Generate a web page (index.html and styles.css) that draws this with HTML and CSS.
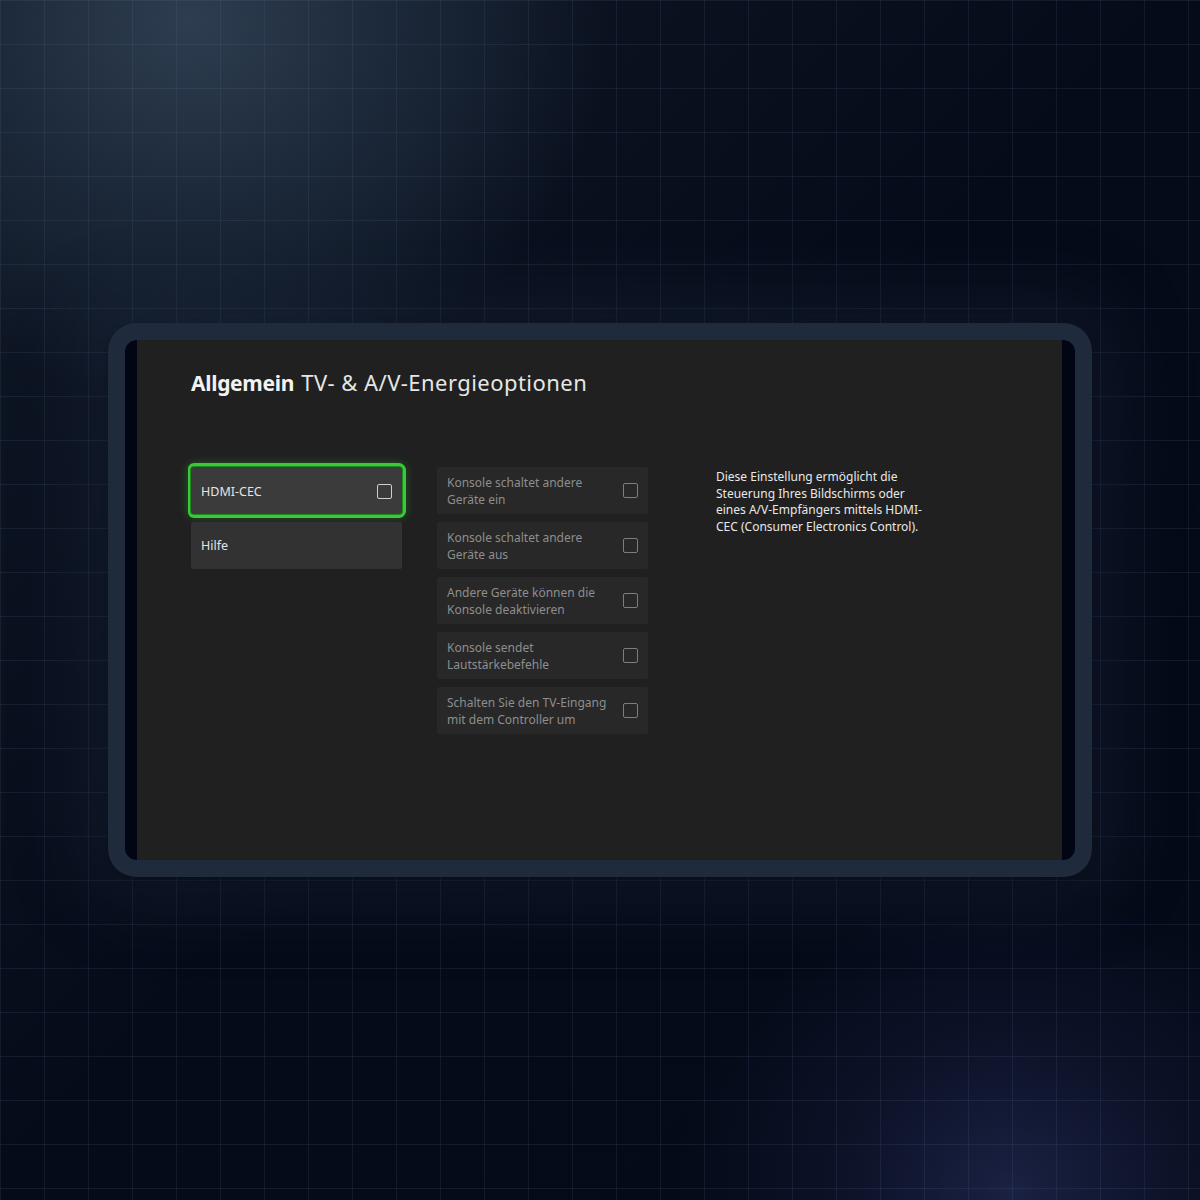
FILE: index.html
```html
<!DOCTYPE html>
<html lang="de">
<head>
<meta charset="utf-8">
<title>TV- &amp; A/V-Energieoptionen</title>
<link rel="stylesheet" href="styles.css">
</head>
<body>
<div class="stage">
  <div class="frame">
    <div class="screen">
      <div class="content">
        <h1 class="title"><span class="crumb">Allgemein</span> TV- &amp; A/V-Energieoptionen</h1>
        <div class="columns">
          <div class="col nav">
            <div class="item focused"><span class="label">HDMI-CEC</span><span class="box"></span></div>
            <div class="item"><span class="label">Hilfe</span></div>
          </div>
          <div class="col options">
            <div class="opt"><span class="label">Konsole schaltet andere Geräte ein</span><span class="box"></span></div>
            <div class="opt"><span class="label">Konsole schaltet andere Geräte aus</span><span class="box"></span></div>
            <div class="opt"><span class="label">Andere Geräte können die Konsole deaktivieren</span><span class="box"></span></div>
            <div class="opt"><span class="label">Konsole sendet Lautstärkebefehle</span><span class="box"></span></div>
            <div class="opt"><span class="label">Schalten Sie den TV-Eingang mit dem Controller um</span><span class="box"></span></div>
          </div>
          <p class="desc">Diese Einstellung ermöglicht die Steuerung Ihres Bildschirms oder eines A/V-Empfängers mittels HDMI-CEC (Consumer Electronics Control).</p>
        </div>
      </div>
    </div>
  </div>
</div>
</body>
</html>
```

FILE: styles.css
```css
html, body {
  margin: 0;
  padding: 0;
}
body {
  width: 1200px;
  height: 1200px;
  overflow: hidden;
  font-family: "Noto Sans", "Open Sans", sans-serif;
  background-color: #050a18;
  background-image:
    linear-gradient(to right, rgba(110, 130, 165, 0.13) 1px, transparent 1px),
    linear-gradient(to bottom, rgba(110, 130, 165, 0.13) 1px, transparent 1px),
    radial-gradient(ellipse 420px 380px at 190px 20px, #2e3d50 0%, #1d2a3b 45%, rgba(10, 16, 30, 0) 100%),
    radial-gradient(ellipse 330px 300px at 1010px 1190px, #1a2142 0%, rgba(20, 26, 55, 0.5) 50%, rgba(5, 10, 24, 0) 100%),
    linear-gradient(135deg, #101826 0%, #060b19 50%, #050a18 100%);
  background-size: 44px 44px, 44px 44px, 100% 100%, 100% 100%, 100% 100%;
  background-position: 0 0, 0 0, 0 0, 0 0, 0 0;
}
.stage {
  height: 1200px;
  display: flex;
  align-items: center;
  justify-content: center;
}
.frame {
  width: 984px;
  height: 554px;
  box-sizing: border-box;
  padding: 17px;
  background: #1f2a3c;
  border-radius: 28px;
  box-shadow: 0 0 70px 24px rgba(32, 44, 64, 0.35), 0 3px 6px rgba(0, 0, 0, 0.5);
}
.screen {
  height: 100%;
  box-sizing: border-box;
  background: #020514;
  border-radius: 12px;
  padding: 0 13px 0 12px;
  overflow: hidden;
}
.content {
  height: 100%;
  background: #202020;
  box-sizing: border-box;
  padding: 26px 0 0 54px;
}
.title {
  margin: 0;
  font-family: "Noto Sans", sans-serif;
  font-size: 22px;
  line-height: 32px;
  height: 32px;
  font-weight: 400;
  color: #e6e6e6;
  letter-spacing: 0.45px;
}
.crumb {
  font-weight: 700;
  color: #f2f2f2;
  font-size: 21px;
  letter-spacing: -0.3px;
  margin-right: 1px;
}
.columns {
  display: flex;
  align-items: flex-start;
  margin-top: 69px;
}
.col {
  display: flex;
  flex-direction: column;
  gap: 8px;
  width: 211px;
}
.options {
  margin-left: 35px;
}
.item, .opt {
  height: 47px;
  box-sizing: border-box;
  display: flex;
  align-items: center;
  justify-content: space-between;
  padding: 0 10px;
  border-radius: 2px;
}
.item {
  background: #323232;
  color: #e4e4e4;
  font-size: 12.5px;
}
.item.focused {
  background: #3b3b3b;
  padding-top: 1px;
  box-shadow:
    0 0 0 1px #1e8a1e,
    0 0 0 3px #3ac93a,
    0 1px 0 3px #3ac93a,
    0 -1px 0 3px #3ac93a,
    1px 0 0 3px #3ac93a,
    0 0 9px 4px rgba(60, 200, 60, 0.3);
  border-radius: 3px;
}
.box {
  width: 15px;
  height: 15px;
  box-sizing: border-box;
  border: 1.5px solid #cfcfcf;
  border-radius: 2px;
  flex: none;
}
.opt {
  background: #282828;
  color: #8e8e8e;
  font-size: 12px;
  line-height: 16.5px;
  padding-top: 2px;
}
.opt .label {
  max-width: 162px;
}
.opt .box {
  border-color: #7d7d7d;
  margin-top: -2px;
}
.desc {
  margin: 0 0 0 68px;
  width: 215px;
  font-size: 12px;
  line-height: 16.5px;
  color: #e8e8e8;
  padding-top: 2px;
}
```
